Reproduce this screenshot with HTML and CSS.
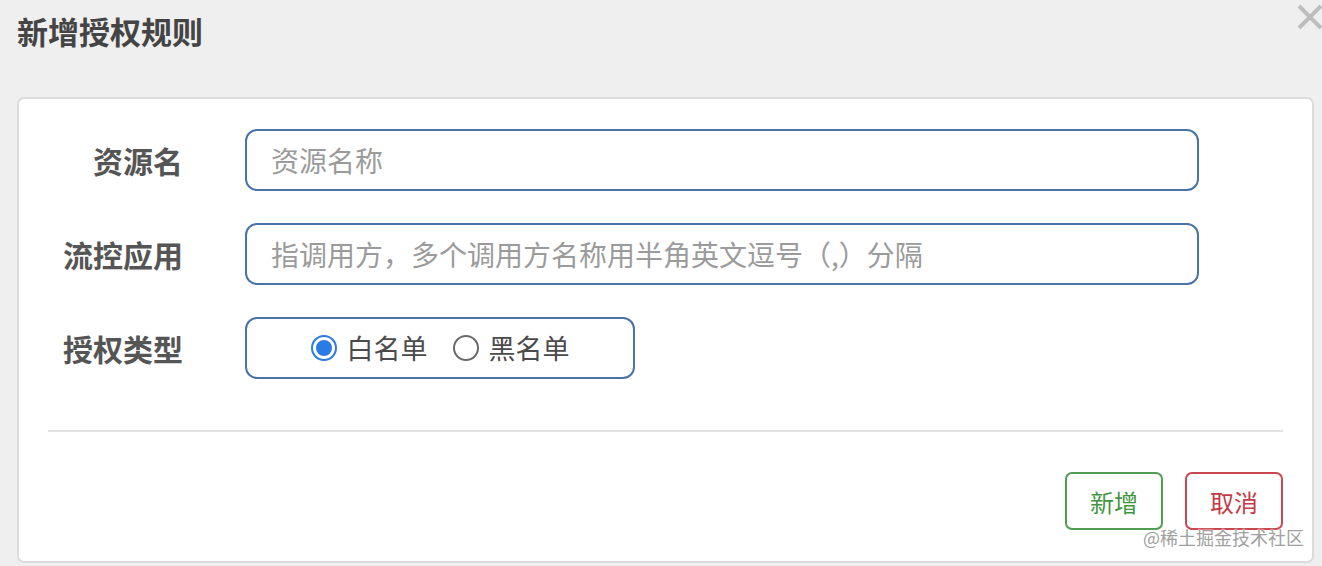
FILE: index.html
```html
<!DOCTYPE html>
<html lang="zh-CN">
<head>
<meta charset="utf-8">
<title>新增授权规则</title>
<link rel="stylesheet" href="styles.css">
</head>
<body>
<div class="modal">
  <div class="modal-header">
    <h3 class="modal-title">新增授权规则</h3>
    <button class="close" aria-label="关闭">
      <svg width="26" height="26" viewBox="0 0 26 26"><path d="M2 2 L24 24 M24 2 L2 24" stroke="#bdbdbd" stroke-width="4" stroke-linecap="butt"/></svg>
    </button>
  </div>
  <div class="card">
    <form class="form">
      <label class="label">资源名</label>
      <input class="field" type="text" placeholder="资源名称">
      <label class="label">流控应用</label>
      <input class="field" type="text" placeholder="指调用方，多个调用方名称用半角英文逗号（,）分隔">
      <label class="label">授权类型</label>
      <div class="radio-box">
        <span class="radio checked"></span><span class="radio-text">白名单</span>
        <span class="radio"></span><span class="radio-text">黑名单</span>
      </div>
    </form>
    <div class="divider"></div>
    <div class="footer">
      <button class="btn btn-green">新增</button>
      <button class="btn btn-red">取消</button>
    </div>
  </div>
  <div class="watermark">@稀土掘金技术社区</div>
</div>
</body>
</html>
```

FILE: styles.css
```css
html, body {
  margin: 0;
  padding: 0;
  background: #efefef;
  font-family: "Noto Sans CJK SC", "Noto Sans", sans-serif;
}
.modal {
  position: relative;
  width: 1322px;
  height: 566px;
  overflow: hidden;
}
.modal-header {
  height: 97px;
  box-sizing: border-box;
  padding: 11px 0 0 17px;
}
.modal-title {
  margin: 0;
  font-size: 31px;
  line-height: 40px;
  font-weight: 700;
  color: #444;
}
.close {
  position: absolute;
  top: 4px;
  right: -1px;
  padding: 0;
  border: 0;
  background: none;
  width: 26px;
  height: 26px;
}
.close svg { display: block; }
.card {
  margin-left: 17px;
  width: 1297px;
  height: 466px;
  box-sizing: border-box;
  background: #fff;
  border: 2px solid #dcdcdc;
  border-radius: 7px;
}
.form {
  display: grid;
  grid-template-columns: 135px 954px;
  column-gap: 62px;
  row-gap: 32px;
  padding: 30px 0 0 29px;
  align-items: center;
}
.label {
  text-align: right;
  font-size: 30px;
  font-weight: 700;
  color: #555;
  line-height: 40px;
}
.field {
  height: 62px;
  box-sizing: border-box;
  border: 2px solid #4a74a6;
  border-radius: 12px;
  padding: 0 24px;
  font-family: inherit;
  font-size: 28px;
  color: #555;
  outline: none;
}
.field::placeholder { color: #9b9b9b; }
.radio-box {
  width: 390px;
  height: 62px;
  box-sizing: border-box;
  border: 2px solid #4a74a6;
  border-radius: 12px;
  display: flex;
  align-items: center;
  justify-content: center;
}
.radio {
  width: 26px;
  height: 26px;
  box-sizing: border-box;
  border-radius: 50%;
  border: 2px solid #6a6a6a;
  margin-right: 10px;
  position: relative;
}
.radio.checked {
  border: 2px solid #2b7be4;
}
.radio.checked::after {
  content: "";
  position: absolute;
  left: 3px;
  top: 3px;
  width: 16px;
  height: 16px;
  border-radius: 50%;
  background: #2b7be4;
}
.radio-text {
  font-size: 27px;
  color: #4a4a4a;
  line-height: 40px;
  margin-right: 25px;
}
.radio-text:last-child { margin-right: 0; }
.divider {
  margin: 51px 29px 0 29px;
  height: 2px;
  background: #e4e4e4;
}
.footer {
  display: flex;
  justify-content: flex-end;
  gap: 22px;
  padding: 40px 29px 0 0;
}
.btn {
  width: 98px;
  height: 58px;
  box-sizing: border-box;
  background: #fff;
  border-radius: 7px;
  font-family: inherit;
  font-size: 24px;
  padding: 0;
}
.btn-green { border: 2px solid #4f9e52; color: #3f963f; }
.btn-red { border: 2px solid #c9474f; color: #c53a44; }
.watermark {
  position: absolute;
  left: 1143px;
  top: 524px;
  font-size: 18px;
  color: #a0a0a0;
  text-shadow: 0 0 2px #fff, 0 0 2px #fff;
}
```
